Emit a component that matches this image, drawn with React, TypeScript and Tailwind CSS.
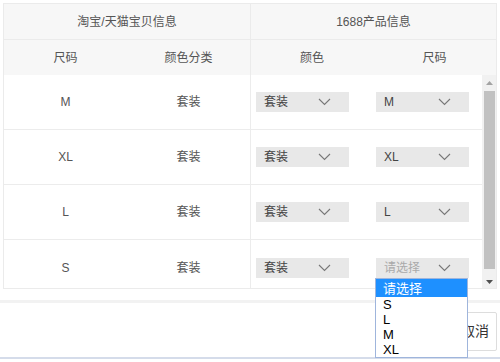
import React from 'react';

const rows = [
    { size: 'M', color: '套装', pick: 'M' },
    { size: 'XL', color: '套装', pick: 'XL' },
    { size: 'L', color: '套装', pick: 'L' },
    { size: 'S', color: '套装', pick: '' },
];

const font = 'font-["Liberation_Sans","Noto_Sans_CJK_SC",sans-serif]';

function Chevron() {
    return (
        <svg width="13" height="8" viewBox="0 0 13 8" fill="none" className="shrink-0">
            <path d="M1 1l5.5 5.5L12 1" stroke="#777" strokeWidth="1.1" />
        </svg>
    );
}

function Select({ value }: { value: string }) {
    return (
        <div className="flex items-center justify-between w-[93px] h-[20px] bg-[#e8e8e8] pl-[8px] pr-[18px] text-[12px]">
            <span className={value ? 'text-[#444]' : 'text-[#aaa]'}>{value || '请选择'}</span>
            <Chevron />
        </div>
    );
}

function Dropdown() {
    // open option list of the last row's size select
    return (
        <div className="absolute left-[375px] top-[278px] z-10 w-[93px] bg-white border border-[#9fb5dc] text-[13px] text-black leading-none">
            <div className="h-[18px] flex items-center pl-[7px] bg-[#1e90ff] text-white">请选择</div>
            {['S', 'L', 'M', 'XL'].map((o) => (
                <div key={o} className="h-[15px] flex items-center pl-[7px]">{o}</div>
            ))}
        </div>
    );
}

export default function App() {
    return (
        <div className={`relative w-[500px] h-[362px] bg-white overflow-hidden ${font}`}>
            <div className="pt-[3px] pl-[3px] pr-[3px]">
                <div className="border border-[#ebebeb]">
                    {/* header */}
                    <div className="flex bg-[#f7f7f7] text-[12px] text-[#555]">
                        <div className="w-[247px] border-r border-[#ebebeb]">
                            <div className="h-[36px] flex items-center justify-center border-b border-[#ebebeb]">淘宝/天猫宝贝信息</div>
                            <div className="h-[35px] flex">
                                <div className="w-[123px] flex items-center justify-center">尺码</div>
                                <div className="flex-1 flex items-center justify-center">颜色分类</div>
                            </div>
                        </div>
                        <div className="flex-1">
                            <div className="h-[36px] flex items-center justify-center border-b border-[#ebebeb]">1688产品信息</div>
                            <div className="h-[35px] flex">
                                <div className="w-[122px] flex items-center justify-center">颜色</div>
                                <div className="flex-1 flex items-center justify-center">尺码</div>
                            </div>
                        </div>
                    </div>

                    {/* body */}
                    <div className="flex h-[213px]">
                        <div className="flex-1 h-full overflow-hidden">
                            {rows.map((r, i) => (
                                <div key={r.size} className={`flex h-[55px] text-[12px] text-[#555] ${i < rows.length - 1 ? 'border-b border-[#ececec]' : ''}`}>
                                    <div className="w-[123px] flex items-center justify-center">{r.size}</div>
                                    <div className="w-[124px] flex items-center justify-center border-r border-[#ececec]">{r.color}</div>
                                    <div className="w-[120px] flex items-center pl-[5px]">
                                        <Select value={r.color} />
                                    </div>
                                    <div className="flex-1 flex items-center pl-[5px]">
                                        <Select value={r.pick} />
                                    </div>
                                </div>
                            ))}
                        </div>
                        {/* scrollbar */}
                        <div className="w-[14px] h-full flex flex-col items-center bg-[#f1f1f1] pt-[3px]">
                            <svg width="7" height="4" viewBox="0 0 7 4" className="mt-[3px]"><path d="M0 4h7L3.5 0z" fill="#a3a3a3" /></svg>
                            <div className="w-[11px] h-[178px] bg-[#c1c1c1] mt-[6px]" />
                            <svg width="7" height="4" viewBox="0 0 7 4" className="mt-[11px]"><path d="M0 0h7L3.5 4z" fill="#505050" /></svg>
                        </div>
                    </div>
                </div>
            </div>

            {/* footer */}
            <div className="mt-[11px] h-[3px] bg-[#f2f2f2]" />
            <div className="h-[56px] flex items-center justify-end pr-[3px] border-b-2 border-[#d5dcea]">
                <div className="h-[39px] w-[44px] flex items-center justify-center border border-[#dddddd] rounded-[2px] text-[14px] text-[#333] mt-[2px]">取消</div>
            </div>

            <Dropdown />
        </div>
    );
}
